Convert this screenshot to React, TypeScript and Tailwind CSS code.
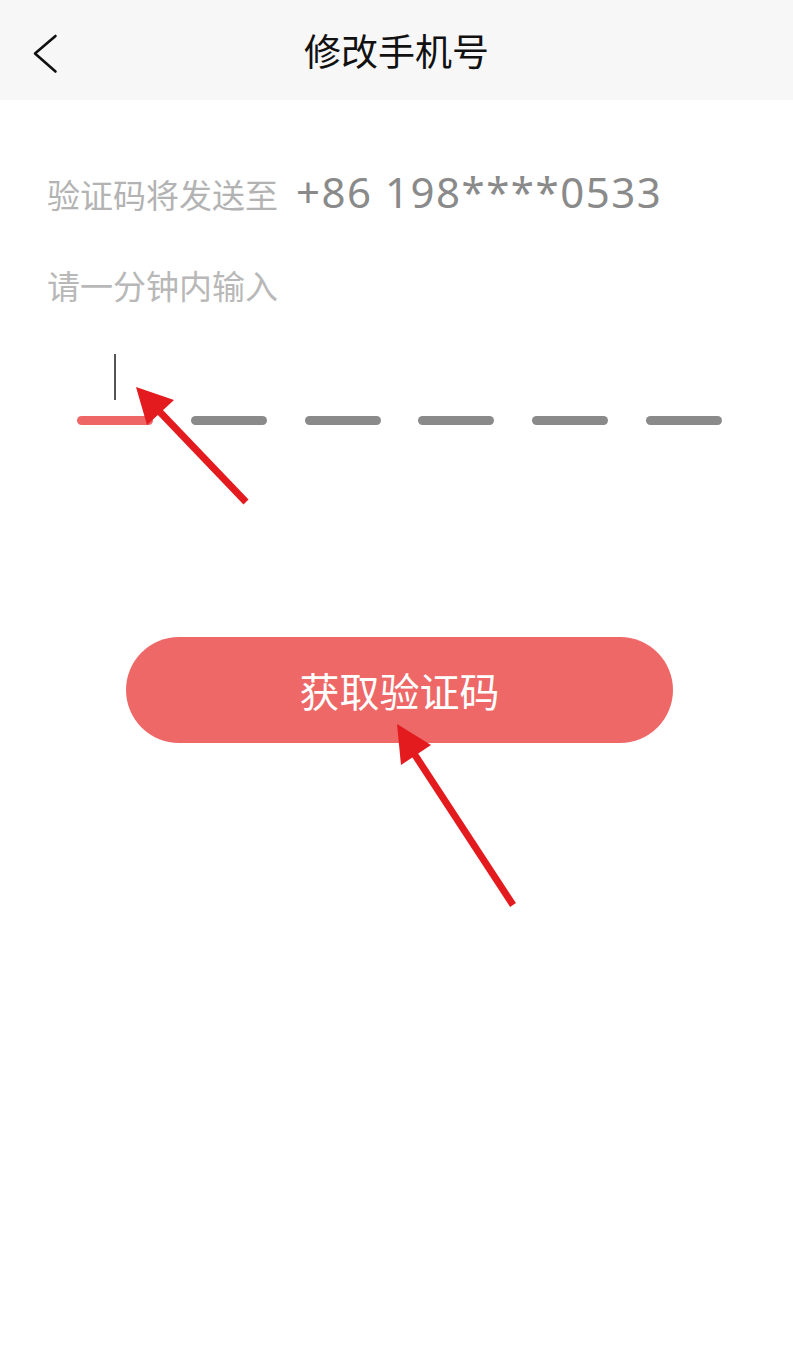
const cjk = "font-['Noto_Sans_CJK_SC',sans-serif]"

// Six code slots, the first one is active
function CodeSlots() {
  const slots = [0, 1, 2, 3, 4, 5]
  return (
    <div className="ml-[77px] mr-[71px] flex justify-between">
      {slots.map((i) => (
        <div key={i} className="flex w-[76px] flex-col items-center">
          <div className="flex h-[62px] items-start">
            {i === 0 && <div className="h-[46px] w-[2px] bg-[#555555]" />}
          </div>
          <div
            className={
              i === 0
                ? 'h-[9px] w-full rounded-full bg-[#ee6666]'
                : 'h-[9px] w-full rounded-full bg-[#8a8a8a]'
            }
          />
        </div>
      ))}
    </div>
  )
}

// Red annotation arrows drawn over the screenshot
function Arrows() {
  return (
    <svg
      className="pointer-events-none absolute left-0 top-0"
      width="793"
      height="1363"
      viewBox="0 0 793 1363"
    >
      <line x1="246" y1="502" x2="158" y2="410" stroke="#e31b1f" strokeWidth="7" />
      <polygon points="136,387 147,425 174,400" fill="#e31b1f" />
      <line x1="513" y1="905" x2="413" y2="752" stroke="#e31b1f" strokeWidth="7" />
      <polygon points="397,724 401,765 431,745" fill="#e31b1f" />
    </svg>
  )
}

export default function App() {
  return (
    <div className={`relative min-h-[1363px] w-[793px] bg-white ${cjk}`}>
      <header className="relative flex h-[100px] items-center justify-center bg-[#f7f7f7]">
        <button className="absolute left-[30px] top-[32px]">
          <svg width="30" height="44" viewBox="0 0 30 44" fill="none">
            <polyline
              points="25.5,4 5,21.5 25.5,39.5"
              stroke="#111111"
              strokeWidth="2.6"
              strokeLinecap="round"
              strokeLinejoin="round"
            />
          </svg>
        </button>
        <h1 className="text-[37px] leading-none text-[#111111]">修改手机号</h1>
      </header>

      <div className="pl-[47px]">
        <div className="mt-[71px] flex items-baseline">
          <span className="text-[33px] leading-none text-[#b3b3b3]">验证码将发送至</span>
          <span className="ml-[18px] font-['Noto_Sans',sans-serif] text-[42px] leading-none tracking-[1.5px] text-[#8a8a8a]">
            +86 198****0533
          </span>
        </div>
        <p className="mt-[56px] text-[33px] leading-none text-[#b8b8b8]">请一分钟内输入</p>
      </div>

      <div className="mt-[52px]">
        <CodeSlots />
      </div>

      <div className="mt-[212px] pl-[126px]">
        <button className="flex h-[106px] w-[547px] items-center justify-center rounded-full bg-[#ee6868] text-[40px] leading-none text-white">
          获取验证码
        </button>
      </div>

      <Arrows />
    </div>
  )
}
